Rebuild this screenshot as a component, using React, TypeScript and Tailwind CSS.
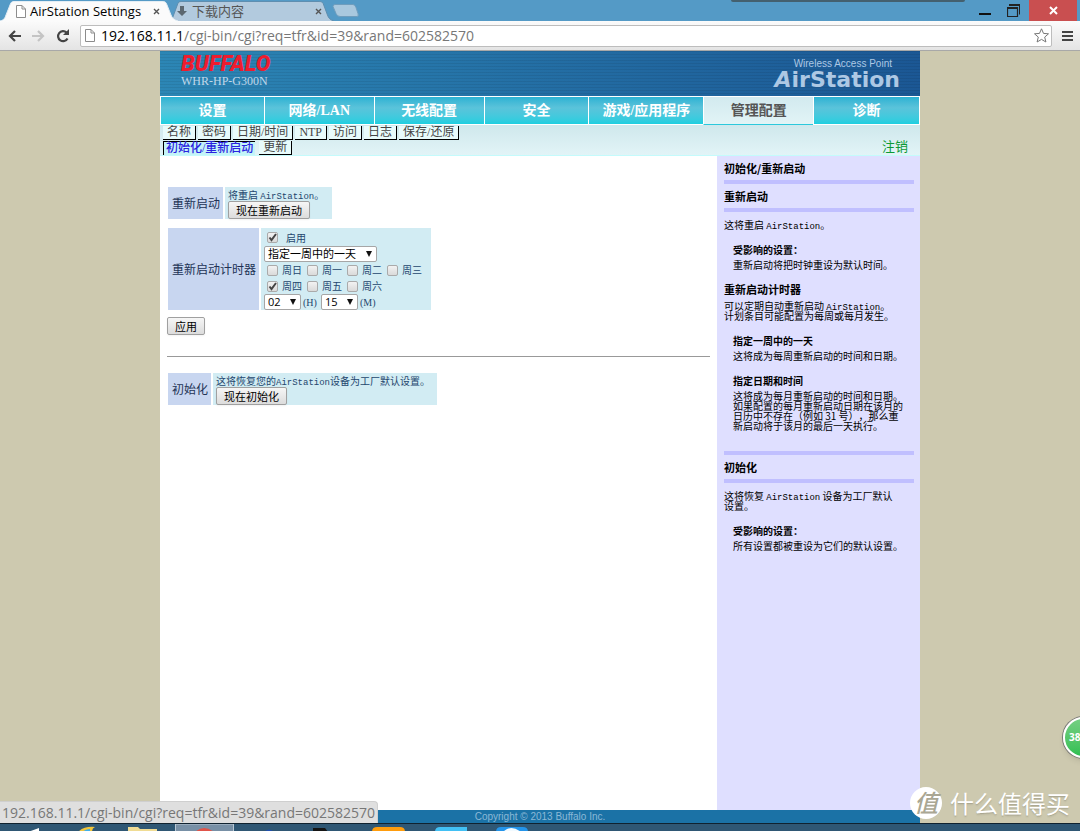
import { useState, type ReactNode } from "react";

const URL_HOST = "192.168.11.1";
const URL_PATH = "/cgi-bin/cgi?req=tfr&id=39&rand=602582570";

const MENU = ["设置", "网络/LAN", "无线配置", "安全", "游戏/应用程序", "管理配置", "诊断"];
const SUBMENU_TOP = ["名称", "密码", "日期/时间", "NTP", "访问", "日志", "保存/还原"];
const DAYS = ["周日", "周一", "周二", "周三", "周四", "周五", "周六"];

function PageIcon() {
  return (
    <svg width="10" height="13" viewBox="0 0 10 13" fill="#fff" stroke="#8c8c8c">
      <path d="M.5.5h5.5l3.5 3.5v8.500h-9z" />
      <path d="M6 .5v3.500h3.500" fill="none" />
    </svg>
  );
}

function CloseIcon() {
  return (
    <svg width="7" height="7" viewBox="0 0 7 7" stroke="#555" strokeWidth="1.400">
      <path d="M1 1l5 5M6 1l-5 5" />
    </svg>
  );
}

function Tab({ active, icon, title }: { active?: boolean; icon: ReactNode; title: string }) {
  return (
    <div className={`relative flex h-5 items-center ${active ? "z-10 w-[172px] pl-4" : "w-[164px] pl-1"}`}>
      <svg
        className={`absolute inset-y-0 h-5 ${active ? "left-0 w-[178px]" : "-left-1 w-[166px]"}`}
        viewBox="0 0 178 20"
        preserveAspectRatio="none"
        fill={active ? "#fbfbfb" : "#b2cade"}
        stroke={active ? "#e4eef5" : "#5d8dae"}
      >
        <path d="M0 20C4 19 5 17 6 14L10 4C11 1 12 .5 14 .5H162C165 .5 166 1 167 4L171 14C172 17 174 19 178 20" />
      </svg>
      <button className="relative flex flex-1 items-center gap-1 text-left text-[13px]">
        {icon}
        <span className={`leading-5 whitespace-nowrap ${active ? "text-black" : "text-[#555]"}`}>{title}</span>
      </button>
      <button aria-label={`关闭 ${title}`} className={`relative ${active ? "mr-3" : "mr-[14px]"}`}>
        <CloseIcon />
      </button>
    </div>
  );
}

function BrowserChrome() {
  return (
    <header className="font-['Open_Sans','Noto_Sans_CJK_SC',sans-serif]">
      <div className="flex h-[21px] items-end bg-[#549ac6]">
        <Tab active icon={<PageIcon />} title="AirStation Settings" />
        <Tab
          icon={
            <svg width="12" height="12" viewBox="0 0 12 12" fill="#5b6770">
              <path d="M4 1h4v5h3L6 11 1 6h3z" />
            </svg>
          }
          title="下载内容"
        />
        <button aria-label="新标签页" className="mb-1 -ml-1">
          <svg width="27" height="13" viewBox="0 0 27 13" fill="#a9c8de" stroke="#6f9dbd">
            <path d="M3 .5h18q2 0 3 3l2 6q1 3-1 3H8q-3 0-4-3l-3-7q0-2 2-2z" />
          </svg>
        </button>
        <div className="ml-auto flex self-start">
          <div className="mr-2 h-[2px] w-[234px] rounded-b bg-[#44606f]" />
          <button aria-label="最小化" className="flex h-5 w-6 items-center justify-center">
            <svg width="12" height="12" viewBox="0 0 12 12" stroke="#111" strokeWidth="2"><path d="M0 10h12" /></svg>
          </button>
          <button aria-label="还原" className="flex h-5 w-8 items-center justify-center">
            <svg width="13" height="13" viewBox="0 0 13 13" fill="none" stroke="#222">
              <path d="M.5 3.500h10v9H.5z" strokeWidth="1.200" />
              <path d="M0 4h11M2 1h11" strokeWidth="2" />
              <path d="M12.500 1v9.500" />
            </svg>
          </button>
          <button aria-label="关闭" className="mr-[3px] flex h-[21px] w-12 items-center justify-center bg-[#c94f50]">
            <svg width="9" height="9" viewBox="0 0 9 9" stroke="#fff" strokeWidth="2"><path d="M1 1l7 7M8 1L1 8" /></svg>
          </button>
        </div>
      </div>
      <div className="flex h-[30px] items-center border-b border-[#a8a8a8] bg-linear-to-b from-[#fbfbfb] to-[#e4e4e4] pr-1 pl-2">
        <button aria-label="后退" className="w-6">
          <svg width="13" height="12" viewBox="0 0 13 12" fill="none" stroke="#444" strokeWidth="2.200"><path d="M13 6H2M7 1L2 6l5 5" /></svg>
        </button>
        <button aria-label="前进" className="w-6">
          <svg width="13" height="12" viewBox="0 0 13 12" fill="none" stroke="#c4c4c4" strokeWidth="2.200"><path d="M0 6h11M6 1l5 5-5 5" /></svg>
        </button>
        <button aria-label="重新加载" className="w-6">
          <svg width="14" height="14" viewBox="0 0 14 14">
            <path d="M11.500 9.500A5 5 0 1 1 10.500 3.500" fill="none" stroke="#444" strokeWidth="2.200" />
            <path d="M13 0v6H7z" fill="#444" />
          </svg>
        </button>
        <div className="relative flex h-[22px] flex-1 items-center rounded-xs border border-[#bdbdbd] bg-white px-1 text-sm">
          <PageIcon />
          <div className="ml-[6px] flex-1 leading-5 whitespace-nowrap text-[#777]">
            <span className="text-black">{URL_HOST}</span>{URL_PATH}
          </div>
          <input
            aria-label="地址"
            className="absolute inset-0 bg-transparent text-transparent outline-none"
          />
          <button aria-label="收藏" className="relative -mr-1 px-[2px]">
            <svg width="15" height="15" viewBox="0 0 15 15" fill="#fff" stroke="#777" strokeLinejoin="round">
              <path d="M7.500.8l2 4.600 5 .4-3.800 3.300 1.200 4.900-4.400-2.600L3.100 14l1.200-4.900L.5 5.800l5-.4z" />
            </svg>
          </button>
        </div>
        <button aria-label="菜单" className="ml-[6px] flex w-[18px] flex-col items-center gap-[2px]">
          <span className="h-[2px] w-[11px] bg-[#444]" />
          <span className="h-[2px] w-[11px] bg-[#444]" />
          <span className="h-[2px] w-[11px] bg-[#444]" />
        </button>
      </div>
    </header>
  );
}

function Chip({ children, current }: { children: ReactNode; current?: boolean }) {
  return (
    <a
      href="#"
      className={
        current
          ? "border-t border-l border-black bg-[#c4f4f8] px-[2px] leading-[13px] font-medium text-[#2a22e0]"
          : "border-r border-b border-black bg-[#e8fbfb] px-1 leading-[13px] text-[#444]"
      }
    >
      {children}
    </a>
  );
}

function Menu() {
  return (
    <nav>
      <div className="grid grid-cols-[104fr_110fr_110fr_105fr_115fr_110fr_106fr] border-t border-r border-white text-center text-sm leading-[27px] font-bold">
        {MENU.map((item) => (
          <a
            key={item}
            href="#"
            className={
              item === "管理配置"
                ? "border-b border-l border-b-[#2cc8dc] border-l-white bg-linear-to-b from-[#d2eaef] to-[#e2f4f6] text-[#555]"
                : "border-b border-l border-white bg-linear-to-b from-[#2ab2d3] via-[#5ac3da] via-40% to-[#1ccfe0] text-white"
            }
          >
            {item}
          </a>
        ))}
      </div>
      <div className="flex items-end justify-between border-b border-[#c4fbfc] bg-linear-to-b from-[#cfe8ec] to-[#e2f4f7] pr-3 pl-[3px] text-xs">
        <div>
          <div className="flex gap-[2px] pt-px pb-px">
            {SUBMENU_TOP.map((item) => <Chip key={item}>{item}</Chip>)}
          </div>
          <div className="flex gap-1">
            <Chip current>初始化/重新启动</Chip>
            <Chip>更新</Chip>
          </div>
        </div>
        <a href="#" className="text-[13px] leading-4 text-[#0c9a35]">注销</a>
      </div>
    </nav>
  );
}

function Button({ children }: { children: ReactNode }) {
  return (
    <button className="block rounded-xs border border-[#a0a0a0] bg-linear-to-b from-[#f6f6f6] to-[#dcdcdc] px-[7px] text-[11px] leading-4 text-black shadow-xs">
      {children}
    </button>
  );
}

function Select({ label, options, wide }: { label: string; options: string[]; wide?: boolean }) {
  return (
    <span className={`relative inline-block ${wide ? "w-[113px]" : "w-[37px]"}`}>
      <select
        aria-label={label}
        className="block h-4 w-full appearance-none rounded-xs border border-[#a6a6a6] bg-white pl-[3px] font-['Open_Sans','Noto_Sans_CJK_SC',sans-serif] text-[11px] leading-[14px] text-black"
      >
        {options.map((o) => <option key={o}>{o}</option>)}
      </select>
      <svg className="pointer-events-none absolute top-[5px] right-[5px]" width="6" height="6" viewBox="0 0 6 6">
        <path d="M0 0h6L3 6z" fill="#111" />
      </svg>
    </span>
  );
}

function Check({ label, initial, wide }: { label: string; initial?: boolean; wide?: boolean }) {
  const [on, setOn] = useState(!!initial);
  return (
    <label className={`flex items-center pl-[3px] ${wide ? "gap-2" : "w-10 gap-1"}`}>
      <span className="relative block size-[11px]">
        <input
          type="checkbox"
          checked={on}
          onChange={(e) => setOn(e.target.checked)}
          className="block size-[11px] appearance-none rounded-xs border border-[#aaa] bg-linear-to-b from-[#f2f2f2] to-[#dadada]"
        />
        {on && (
          <svg className="pointer-events-none absolute top-0 left-0" width="11" height="11" viewBox="0 0 11 11" fill="none" stroke="#444" strokeWidth="2">
            <path d="M2.500 5.500L4.500 8 9 2" />
          </svg>
        )}
      </span>
      <span className="whitespace-nowrap">{label}</span>
    </label>
  );
}

function Row({ title, width, children }: { title: string; width: string; children: ReactNode }) {
  return (
    <table className="border-separate border-spacing-[2px] text-[10px] leading-[13px] text-[#24466e]">
      <tbody>
        <tr>
          <th scope="row" className="bg-[#c8d6f0] pr-[3px] pl-1 text-left text-xs font-normal whitespace-nowrap text-[#223355]">{title}</th>
          <td className={`bg-[#d2ecf3] pr-1 pl-[3px] ${width}`}>{children}</td>
        </tr>
      </tbody>
    </table>
  );
}

function Latin({ children }: { children: ReactNode }) {
  return <span className="font-['Liberation_Mono',monospace] text-[9px] leading-0">{children}</span>;
}

function Settings() {
  return (
    <main className="min-w-0 flex-1 bg-white pt-[29px] pr-[7px] pl-[6px]">
      <Row title="重新启动" width="w-[107px]">
        <p className="pt-px whitespace-nowrap">将重启 <Latin>AirStation</Latin>。</p>
        <Button>现在重新启动</Button>
      </Row>
      <div className="h-[5px]" />
      <Row title="重新启动计时器" width="w-[170px]">
        <div className="flex h-[18px] items-center"><Check label="启用" initial wide /></div>
        <Select label="时间表" options={["指定一周中的一天", "指定日期和时间"]} wide />
        <div className="grid w-40 grid-cols-4 leading-4">
          {DAYS.map((d) => <Check key={d} label={d} initial={d === "周四"} />)}
        </div>
        <div className="flex items-center gap-[2px] font-['Liberation_Serif',serif]">
          <Select label="小时" options={["02", "03", "04"]} />
          <span>(H)</span>
          <span className="ml-[2px]"><Select label="分钟" options={["15", "30", "45"]} /></span>
          <span>(M)</span>
        </div>
      </Row>
      <div className="flex pt-[5px] pb-px pl-px">
        <Button>应用</Button>
      </div>
      <hr className="mt-5 mb-[14px] ml-px border-[#999]" />
      <Row title="初始化" width="w-[224px]">
        <p className="pt-px whitespace-nowrap">这将恢复您的<Latin>AirStation</Latin>设备为工厂默认设置。</p>
        <Button>现在初始化</Button>
      </Row>
    </main>
  );
}

function Bar() {
  return <div className="my-1 h-1 bg-[#c0bfff]" />;
}

function Topic({ title, children }: { title: string; children: ReactNode }) {
  return (
    <div className="mt-3 mr-1 ml-[9px]">
      <h4 className="mb-[2px] leading-4 font-bold">{title}</h4>
      <p>{children}</p>
    </div>
  );
}

function Help() {
  return (
    <aside className="w-[203px] shrink-0 bg-[#dfdfff] pt-1 pr-[6px] pl-[7px] text-[10px] leading-[10px] text-black [text-spacing-trim:space-all]">
      <h2 className="text-[11px] leading-4 font-bold">初始化/重新启动</h2>
      <Bar />
      <h3 className="text-[11px] leading-4 font-bold">重新启动</h3>
      <Bar />
      <p className="pt-1">这将重启 <Latin>AirStation</Latin>。</p>
      <Topic title="受影响的设置：">重新启动将把时钟重设为默认时间。</Topic>
      <h3 className="mt-[11px] mb-1 text-[11px] leading-4 font-bold">重新启动计时器</h3>
      <p>
        可以定期自动重新启动 <Latin>AirStation</Latin>。<br />
        计划条目可能配置为每周或每月发生。
      </p>
      <Topic title="指定一周中的一天">这将成为每周重新启动的时间和日期。</Topic>
      <Topic title="指定日期和时间">
        这将成为每月重新启动的时间和日期。如果配置的每月重新启动日期在该月的日历中不存在（例如 31 号），那么重<br />
        新启动将于该月的最后一天执行。
      </Topic>
      <div className="h-4" />
      <Bar />
      <h3 className="text-[11px] leading-4 font-bold">初始化</h3>
      <Bar />
      <p className="pt-1">
        这将恢复 <Latin>AirStation</Latin> 设备为工厂默认<br />
        设置。
      </p>
      <Topic title="受影响的设置：">所有设置都被重设为它们的默认设置。</Topic>
    </aside>
  );
}

function Taskbar() {
  return (
    <div className="h-2 overflow-hidden border-t border-[#10222f] bg-[#2f5774]">
      <svg width="540" height="8" viewBox="0 0 540 8">
        <path d="M28 8l11-4v4z" fill="#fff" />
        <path d="M78 8q6-6 17-5-3 1-3 5z" fill="#f2c53a" />
        <path d="M82 8q4-3 8-3v3z" fill="#3fb0ea" />
        <path d="M128 3h10l2 2h17v3h-29z" fill="#f0dc94" />
        <path d="M175.500 0h58v8h-58z" fill="#7890a6" stroke="#b9c8d4" />
        <path d="M195 8q9-8 19 0z" fill="#e0544a" />
        <path d="M264 8q5-5 10 0z" fill="#2050b0" />
        <path d="M313 8V4h12l3 4z" fill="#151515" />
        <path d="M372 8q0-5 5-5h23q5 0 5 5z" fill="#ff9c0c" />
        <path d="M435 8q0-5 5-5h27v5z" fill="#42c0f4" />
        <path d="M496 8q0-5 5-5h22q5 0 5 5z" fill="#2394ea" />
        <path d="M503 8q8-8 18 0z" fill="#f2faff" />
      </svg>
    </div>
  );
}

export default function App() {
  return (
    <div className="relative flex min-h-screen flex-col overflow-hidden bg-[#cdc9af]">
      <BrowserChrome />
      <div className="mx-auto flex w-full max-w-[760px] flex-1 flex-col font-['Liberation_Serif','Noto_Sans_CJK_SC',serif]">
        <div className="flex h-[45px] justify-between bg-[repeating-linear-gradient(to_bottom,#00000012_0px_1px,transparent_1px_3px),linear-gradient(to_right,#2c86b5,#1b5794)] pr-5 pl-[21px]">
          <div className="pt-[3px]">
            <h1 className="font-['Roboto',sans-serif] text-[22px] leading-5 font-black text-[#ee1c2e] italic">BUFFALO</h1>
            <p className="text-xs leading-[14px] text-[#c0d8ea]">WHR-HP-G300N</p>
          </div>
          <div className="pt-[7px] text-right text-[#adc8e4]">
            <p className="pr-2 font-['Liberation_Sans',sans-serif] text-[10px] leading-3">Wireless Access Point</p>
            <p className="font-['DejaVu_Sans',sans-serif] text-[22px] leading-5 font-bold"><span className="italic">A</span>irStation</p>
          </div>
        </div>
        <Menu />
        <div className="flex flex-1 font-['Noto_Sans_CJK_SC',sans-serif]">
          <Settings />
          <Help />
        </div>
        <footer className="bg-[#1b72a6] text-center font-['Liberation_Sans',sans-serif] text-[10px] leading-[13px] text-[#8ab8d6]">
          Copyright © 2013 Buffalo Inc.
        </footer>
      </div>
      <Taskbar />

      <div className="absolute bottom-2 left-0 rounded-tr border-t border-r border-[#cfcfcf] bg-[#dfdfdf] px-[2px] font-['Open_Sans',sans-serif] text-sm leading-[21px] text-[#777]">
        {URL_HOST}{URL_PATH}
      </div>
      <div className="absolute right-[-24px] bottom-[73px] size-[41px] rounded-full border-2 border-white bg-linear-to-b from-[#74cf83] to-[#2fbf52] pl-1 font-['Open_Sans',sans-serif] text-[10px] leading-[36px] font-bold text-white shadow-md ring-1 ring-[#777]">
        38
      </div>
      <div className="absolute right-[10px] bottom-3 flex items-center gap-2 font-['Noto_Sans_CJK_SC',sans-serif] text-white">
        <span className="size-8 rounded-full bg-white text-center text-2xl leading-[30px] font-medium text-[#aaa793] italic">值</span>
        <span className="text-2xl leading-8 text-shadow-sm">什么值得买</span>
      </div>
    </div>
  );
}
